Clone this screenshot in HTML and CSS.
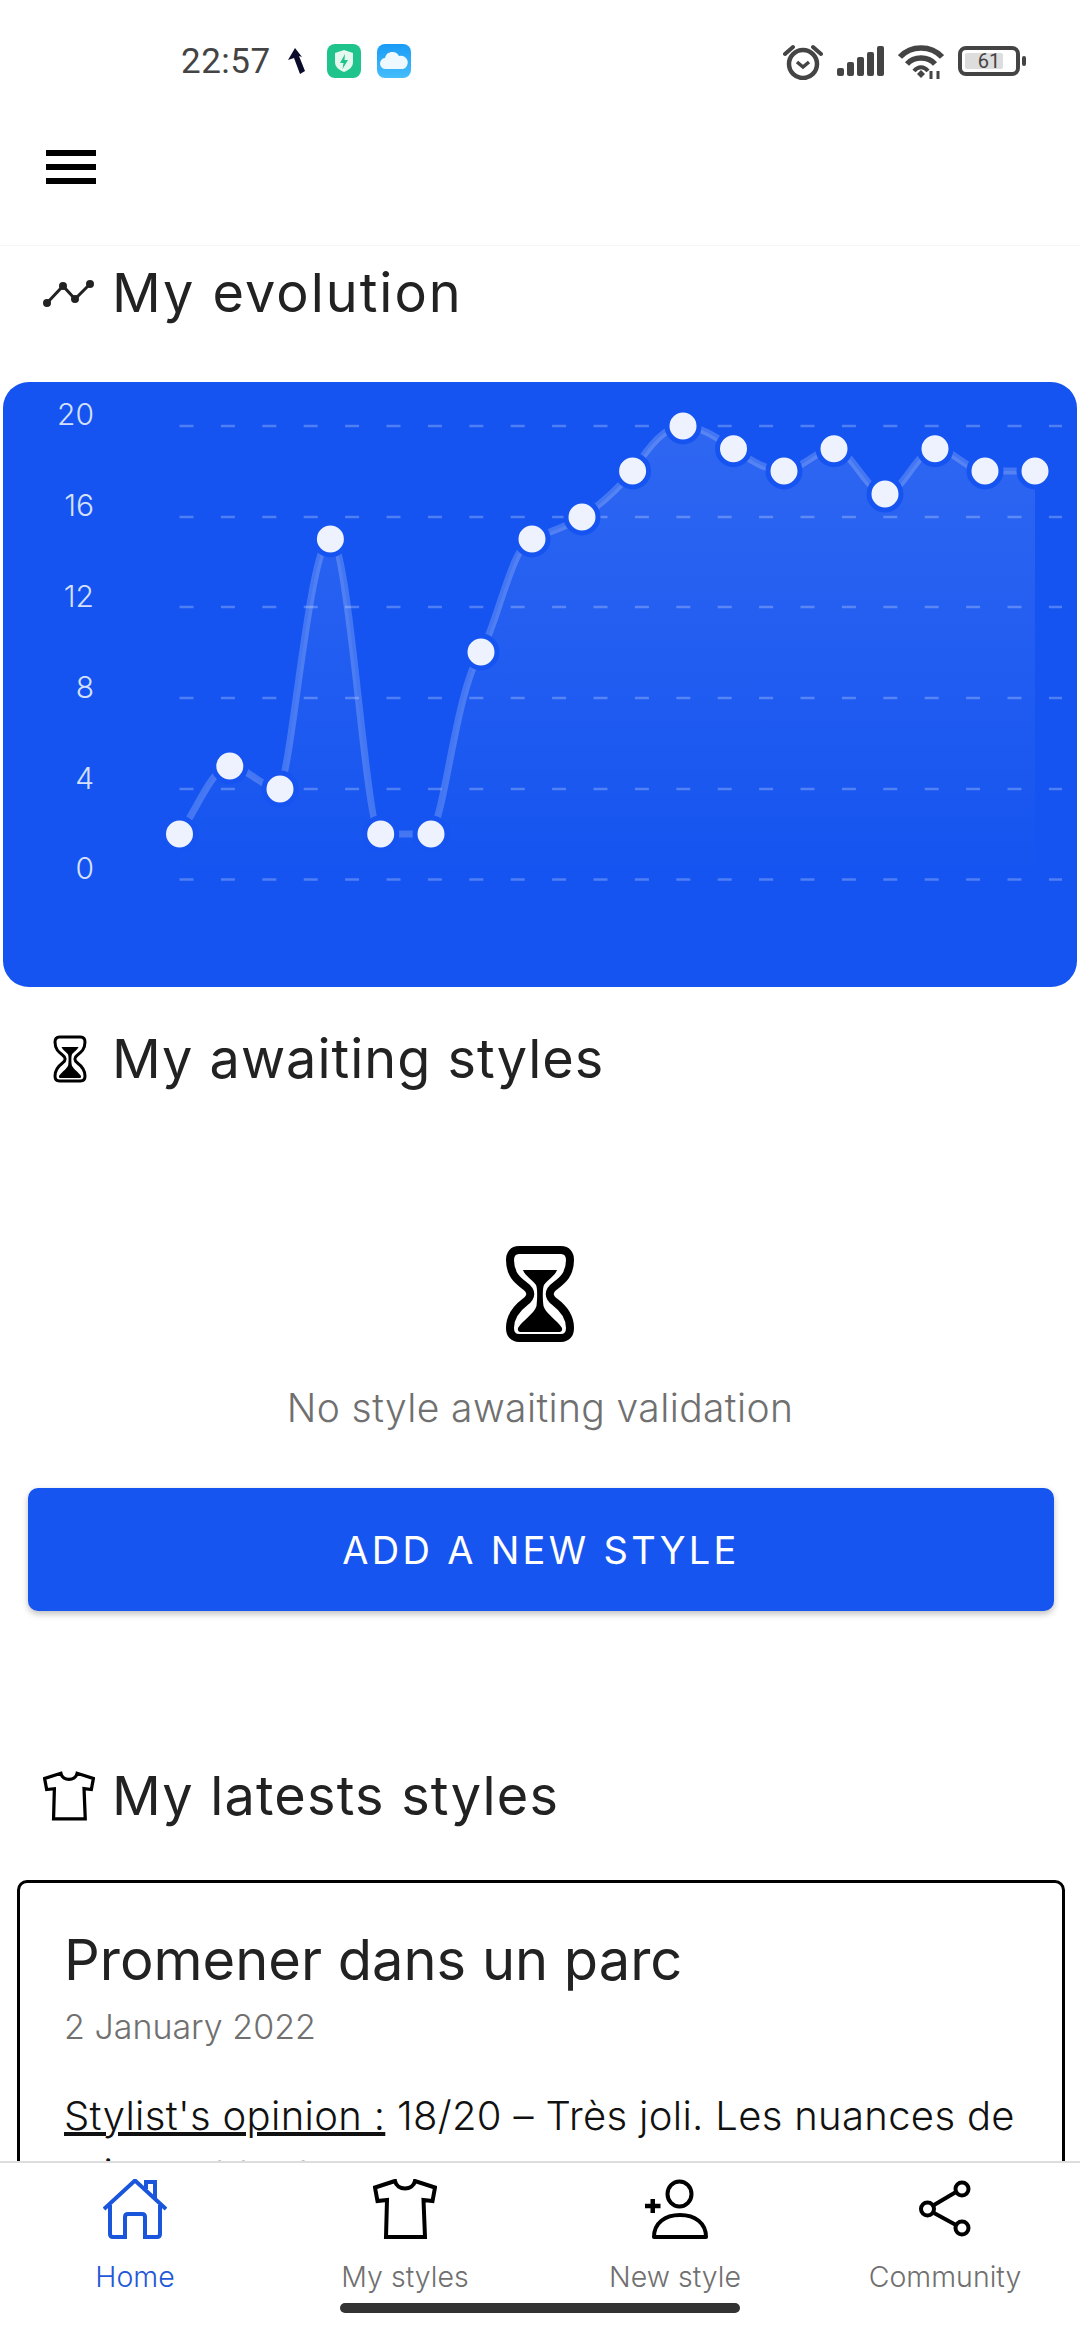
FILE: index.html
```html
<!DOCTYPE html>
<html lang="en">
<head>
<meta charset="UTF-8">
<meta name="viewport" content="width=device-width, initial-scale=1.0">
<title>My evolution</title>
<link rel="stylesheet" href="styles.css">
</head>
<body>
<div class="screen">

    <div class="statusbar">
        <div class="status-left">
            <span class="clock">22:57</span>
            <svg class="notif" width="20" height="28" viewBox="0 0 20 28">
                <path d="M9 1 L2 13 L8 11 L14 27 L19 24 L13 9 L16 10 Z" fill="#0b0b2a"/>
            </svg>
            <svg class="app-icon" width="34" height="34" viewBox="0 0 34 34">
                <rect width="34" height="34" rx="8" fill="#1fc48d"/>
                <path d="M17 6 L26 9 V18 C26 23 22 26 17 28 C12 26 8 23 8 18 V9 Z" fill="#e4f8f0"/>
                <path d="M18 10 L13 19 H16.5 L15.5 25 L21 16 H17.5 Z" fill="#1fc48d"/>
            </svg>
            <svg class="app-icon" width="34" height="34" viewBox="0 0 34 34">
                <defs>
                    <linearGradient id="cloudBg" x1="0" y1="0" x2="0" y2="1">
                        <stop offset="0" stop-color="#1a9bf5"/>
                        <stop offset="1" stop-color="#45bdfb"/>
                    </linearGradient>
                </defs>
                <rect width="34" height="34" rx="8" fill="url(#cloudBg)"/>
                <path d="M9 25 A5.5 5.5 0 0 1 8 14 A7.5 7.5 0 0 1 22 12 A6.5 6.5 0 0 1 26 25 Z" fill="#eef8ff"/>
            </svg>
        </div>
        <div class="status-right">
            <svg width="40" height="37" viewBox="0 0 40 37" fill="none" stroke="#444">
                <circle cx="20" cy="21" r="14" stroke-width="4.5"/>
                <path d="M14 19 L20 24 L26 19" stroke-width="3.5"/>
                <path d="M2 11 L10 4 M38 11 L30 4" stroke-width="4" stroke-linecap="round"/>
            </svg>
            <svg width="47" height="30" viewBox="0 0 47 30" fill="#444">
                <rect x="0" y="22" width="7" height="8" rx="2"/>
                <rect x="10" y="16" width="7" height="14" rx="2"/>
                <rect x="20" y="11" width="7" height="19" rx="2"/>
                <rect x="30" y="6" width="7" height="24" rx="2"/>
                <rect x="40" y="0" width="7" height="30" rx="2"/>
            </svg>
            <svg width="46" height="35" viewBox="0 0 46 35" fill="none" stroke="#444" stroke-width="5.5">
                <path d="M2 13 C13 1 33 1 44 13"/>
                <path d="M9 20 C16 12 30 12 37 20"/>
                <path d="M16 27 C20 22 26 22 30 27" stroke-width="4"/>
                <path d="M19 30 L23 26 L27 30 L23 34 Z" fill="#444" stroke="none"/>
                <path d="M33 35 V27 M40 35 V27" stroke-width="3"/>
            </svg>
            <div class="battery">
                <div class="battery-body">
                    <span class="battery-level"></span>
                    <span class="battery-text">61</span>
                </div>
                <span class="battery-nub"></span>
            </div>
        </div>
    </div>

    <div class="toolbar">
        <div class="hamburger"><span></span><span></span><span></span></div>
    </div>

    <div class="content">
        <h2 class="heading heading-first">
            <span class="heading-icon">
                <svg width="52" height="28" viewBox="0 0 52 28" fill="#222" stroke="#222" stroke-width="3">
                    <path d="M4 24 L20 7 L32 20 L47 5" fill="none"/>
                    <circle cx="4" cy="24" r="2.5"/>
                    <circle cx="20" cy="7" r="2.5"/>
                    <circle cx="32" cy="20" r="2.5"/>
                    <circle cx="47" cy="5" r="2.5"/>
                </svg>
            </span>
            My evolution
        </h2>

        <div class="chart-card">
            <svg class="chart" width="1074" height="605" viewBox="3 382 1074 605">
                <defs>
                    <linearGradient id="areaFill" gradientUnits="userSpaceOnUse" x1="0" y1="426" x2="0" y2="879">
                        <stop offset="0" stop-color="#fff" stop-opacity="0.11"/>
                        <stop offset="1" stop-color="#fff" stop-opacity="0"/>
                    </linearGradient>
                </defs>
                <g class="grid">
                    <line x1="179.5" y1="426" x2="1062" y2="426"/>
                    <line x1="179.5" y1="517" x2="1062" y2="517"/>
                    <line x1="179.5" y1="607" x2="1062" y2="607"/>
                    <line x1="179.5" y1="698" x2="1062" y2="698"/>
                    <line x1="179.5" y1="789" x2="1062" y2="789"/>
                    <line x1="179.5" y1="879.5" x2="1062" y2="879.5"/>
                </g>
                <g class="axis">
                    <text x="94" y="425">20</text>
                    <text x="94" y="516">16</text>
                    <text x="94" y="607">12</text>
                    <text x="94" y="698">8</text>
                    <text x="94" y="789">4</text>
                    <text x="94" y="879">0</text>
                </g>
                <path class="area" d="M179.5 834 C196 811 213 766 229.8 766 C246 766 263 789 280 789 C293 760 310 539 330.4 539 C350 539 365 834 380.7 834 L431 834 C446 810 456 690 481 652 C497 625 512 545 532 539 C548 532 565 528 582 517 C600 505 617 490 632.6 471 C650 445 665 426 683 426 C700 426 716 437 733.5 448.7 C750 460 767 471 784 471 C800 471 817 448.7 834 448.7 C851 448.7 868 494 885 494 C902 494 918 448.7 935 448.7 C952 448.7 968 471 985 471 L1035 471 L1035 879.5 L179.5 879.5 Z"/>
                <path class="line" d="M179.5 834 C196 811 213 766 229.8 766 C246 766 263 789 280 789 C293 760 310 539 330.4 539 C350 539 365 834 380.7 834 L431 834 C446 810 456 690 481 652 C497 625 512 545 532 539 C548 532 565 528 582 517 C600 505 617 490 632.6 471 C650 445 665 426 683 426 C700 426 716 437 733.5 448.7 C750 460 767 471 784 471 C800 471 817 448.7 834 448.7 C851 448.7 868 494 885 494 C902 494 918 448.7 935 448.7 C952 448.7 968 471 985 471 L1035 471"/>
                <g class="dots">
                    <circle cx="179.5" cy="834" r="16"/>
                    <circle cx="229.8" cy="766" r="16"/>
                    <circle cx="280" cy="789" r="16"/>
                    <circle cx="330.4" cy="539" r="16"/>
                    <circle cx="380.7" cy="834" r="16"/>
                    <circle cx="431" cy="834" r="16"/>
                    <circle cx="481" cy="652" r="16"/>
                    <circle cx="532" cy="539" r="16"/>
                    <circle cx="582" cy="517" r="16"/>
                    <circle cx="632.6" cy="471" r="16"/>
                    <circle cx="683" cy="426" r="16"/>
                    <circle cx="733.5" cy="448.7" r="16"/>
                    <circle cx="784" cy="471" r="16"/>
                    <circle cx="834" cy="448.7" r="16"/>
                    <circle cx="885" cy="494" r="16"/>
                    <circle cx="935" cy="448.7" r="16"/>
                    <circle cx="985" cy="471" r="16"/>
                    <circle cx="1035" cy="471" r="16"/>
                </g>
            </svg>
        </div>

        <h2 class="heading heading-awaiting">
            <span class="heading-icon">
                <svg class="hourglass-small" width="36" height="48" viewBox="0 0 70 96">
                    <use href="#hourglass"/>
                </svg>
            </span>
            My awaiting styles
        </h2>

        <div class="empty-state">
            <svg class="hourglass-big" width="70" height="96" viewBox="0 0 70 96">
                <g id="hourglass">
                    <path d="M14 4 H56 C62 4 65 8 65 14 C65 28 58 34 50 40 C43 45 43 51 50 56 C58 62 65 70 65 82 C65 88 62 92 56 92 H14 C8 92 5 88 5 82 C5 70 12 62 20 56 C27 51 27 45 20 40 C12 34 5 28 5 14 C5 8 8 4 14 4 Z" fill="none" stroke="#000"/>
                    <path d="M18 24 H52 C50 30 42 34 39 39 C37.5 42 37.5 52 38.5 60 C41 68 52 74 57 82 C57.5 85 56 86 54 86 H16 C14 86 12.5 85 13 82 C18 74 29 68 31.5 60 C32.5 52 32.5 42 31 39 C28 34 20 30 18 24 Z" fill="#000"/>
                </g>
            </svg>
            <p class="empty-text">No style awaiting validation</p>
        </div>

        <button class="add-button">ADD A NEW STYLE</button>

        <h2 class="heading heading-latest">
            <span class="heading-icon">
                <svg width="52" height="50" viewBox="0 0 64 60">
                    <use href="#shirt"/>
                </svg>
            </span>
            My latests styles
        </h2>

        <div class="style-card">
            <h3 class="style-title">Promener dans un parc</h3>
            <p class="style-date">2 January 2022</p>
            <p class="style-text"><u>Stylist's opinion :</u> 18/20 – Très joli. Les nuances de gris sont toutes</p>
        </div>
    </div>

    <div class="tabbar">
        <div class="tab tab-active">
            <svg width="64" height="60" viewBox="0 0 64 60" fill="none" stroke="#1a56db" stroke-width="4">
                <path d="M1 30 L32 1.5 L63 30"/>
                <path d="M43 10 V3 H52 V20"/>
                <path d="M7 26 V55 Q7 58 10 58 H22 V38 Q22 35 25 35 H39 Q42 35 42 38 V58 H54 Q57 58 57 55 V26"/>
            </svg>
            <span class="tab-label">Home</span>
        </div>
        <div class="tab">
            <svg width="64" height="60" viewBox="0 0 64 60">
                <path id="shirt" d="M22 2 L2 8.5 L4.5 22 L14 21 L13 58 H52 L50.5 21 L59.5 22 L62 8.5 L42 2 C40 12 24 12 22 2 Z" fill="none" stroke="#000" stroke-width="4"/>
            </svg>
            <span class="tab-label">My styles</span>
        </div>
        <div class="tab">
            <svg width="68" height="60" viewBox="0 0 68 60" fill="none" stroke="#000" stroke-width="4">
                <ellipse cx="38.5" cy="15" rx="12" ry="12.5"/>
                <path d="M13 58 C13 44 24 36 39 36 C54 36 65 44 65 58 Z" stroke-linejoin="round"/>
                <path d="M4 27 H19.5 M11.75 20 V34" stroke-width="4.5"/>
            </svg>
            <span class="tab-label">New style</span>
        </div>
        <div class="tab">
            <svg width="52" height="60" viewBox="0 0 52 60" fill="none" stroke="#000" stroke-width="4">
                <path d="M15 26 L37 13 M15 34 L37 46"/>
                <circle cx="8.5" cy="30" r="6.5"/>
                <circle cx="43" cy="10" r="6.5"/>
                <circle cx="43" cy="49" r="6.5"/>
            </svg>
            <span class="tab-label">Community</span>
        </div>
    </div>

    <div class="home-indicator"><span></span></div>
</div>
</body>
</html>
```

FILE: styles.css
```css
* {
    box-sizing: border-box;
}

body {
    margin: 0;
    background-color: #fff;
    font-family: "Inter", "Noto Sans", sans-serif;
    color: #222;
}

.screen {
    width: 1080px;
    height: 2340px;
    display: flex;
    flex-direction: column;
    overflow: hidden;
}

/* status bar */
.statusbar {
    height: 122px;
    flex: none;
    display: flex;
    justify-content: space-between;
    align-items: flex-start;
    padding: 43px 54px 0 181px;
}

.status-left {
    display: flex;
    align-items: center;
    height: 36px;
}

.clock {
    font-family: "Roboto", sans-serif;
    font-size: 35px;
    letter-spacing: 0.5px;
    color: #444;
    width: 105px;
}

.notif {
    margin-right: 21px;
}

.app-icon {
    margin-right: 16px;
}

.status-right {
    display: flex;
    align-items: center;
    gap: 14px;
    height: 36px;
}

.battery {
    display: flex;
    align-items: center;
    gap: 2px;
}

.battery-body {
    width: 62px;
    height: 30px;
    border: 4px solid #444;
    border-radius: 8px;
    display: flex;
    align-items: center;
    justify-content: center;
    overflow: hidden;
    position: relative;
}

.battery-level {
    position: absolute;
    left: 3px;
    top: 3px;
    bottom: 3px;
    width: 38px;
    background-color: #ddd;
    border-radius: 2px;
}

.battery-text {
    position: relative;
    font-family: "Roboto", sans-serif;
    font-size: 20px;
    color: #444;
}

.battery-nub {
    width: 4px;
    height: 10px;
    background-color: #444;
    border-radius: 2px;
}

/* toolbar */
.toolbar {
    height: 124px;
    flex: none;
    padding: 28px 0 0 46px;
    border-bottom: 1px solid #f6f6f6;
}

.hamburger {
    width: 50px;
    display: flex;
    flex-direction: column;
    gap: 8px;
}

.hamburger span {
    height: 6px;
    background-color: #000;
}

/* main area */
.content {
    flex: 1;
    overflow: hidden;
}

.heading {
    margin: 0;
    display: flex;
    align-items: center;
    height: 70px;
    padding-left: 43px;
    font-size: 54px;
    font-weight: 400;
    letter-spacing: 1px;
    line-height: 70px;
    color: #222;
}

.heading-icon {
    width: 69px;
    flex: none;
    display: flex;
}

.heading-first {
    margin-top: 12px;
    letter-spacing: 2px;
}

.chart-card {
    margin: 54px 0 0 3px;
    width: 1074px;
    height: 605px;
    background-color: #1554f0;
    border-radius: 26px;
    overflow: hidden;
}

.chart {
    display: block;
}

.grid line {
    stroke: rgba(255, 255, 255, 0.25);
    stroke-width: 2.5;
    stroke-dasharray: 14 27.4;
}

.axis text {
    fill: #d5e0fc;
    font-size: 30px;
    font-weight: 300;
    text-anchor: end;
}

.area {
    fill: url(#areaFill);
}

.line {
    fill: none;
    stroke: rgba(255, 255, 255, 0.2);
    stroke-width: 7;
}

.dots circle {
    fill: #edf2fe;
    stroke: #1554f0;
    stroke-width: 5;
}

.heading-awaiting {
    margin-top: 37px;
}

.heading-awaiting .heading-icon {
    padding-left: 9px;
}

.hourglass-small {
    stroke-width: 6;
}

.hourglass-big {
    stroke-width: 8;
}

.empty-state {
    margin-top: 152px;
    display: flex;
    flex-direction: column;
    align-items: center;
}

.empty-text {
    margin: 41px 0 0;
    font-size: 39px;
    font-weight: 300;
    letter-spacing: 0.4px;
    line-height: 50px;
    color: #707070;
}

.add-button {
    display: block;
    margin: 55px 0 0 28px;
    width: 1026px;
    height: 123px;
    padding-left: 6px;
    border: none;
    border-radius: 10px;
    background-color: #1655f0;
    color: #fff;
    font-family: inherit;
    font-size: 38px;
    letter-spacing: 3.3px;
    box-shadow: 0 3px 6px rgba(0, 0, 0, 0.25);
}

.heading-latest {
    margin-top: 150px;
    letter-spacing: 1.2px;
}

.style-card {
    margin: 49px 0 0 17px;
    width: 1048px;
    height: 400px;
    border: 3px solid #000;
    border-radius: 10px;
    padding: 42px 36px 40px 44px;
}

.style-title {
    margin: 0;
    font-size: 56px;
    font-weight: 400;
    line-height: 70px;
    color: #222;
}

.style-date {
    margin: 10px 0 0;
    font-size: 34px;
    font-weight: 300;
    line-height: 44px;
    color: #707070;
}

.style-text {
    margin: 38px 0 0;
    font-size: 40px;
    font-weight: 300;
    letter-spacing: 0.33px;
    line-height: 58px;
    color: #111;
}

/* bottom navigation */
.tabbar {
    height: 142px;
    flex: none;
    display: flex;
    border-top: 2px solid #ddd;
    background-color: #fff;
    padding-top: 16px;
}

.tab {
    width: 270px;
    display: flex;
    flex-direction: column;
    align-items: center;
    gap: 18px;
}

.tab-label {
    font-size: 28.5px;
    font-weight: 300;
    line-height: 40px;
    color: #707070;
}

.tab-active .tab-label {
    color: #1f58d8;
}

.home-indicator {
    height: 37px;
    flex: none;
    display: flex;
    justify-content: center;
}

.home-indicator span {
    width: 400px;
    height: 10px;
    background-color: #333;
    border-radius: 5px;
}
```
